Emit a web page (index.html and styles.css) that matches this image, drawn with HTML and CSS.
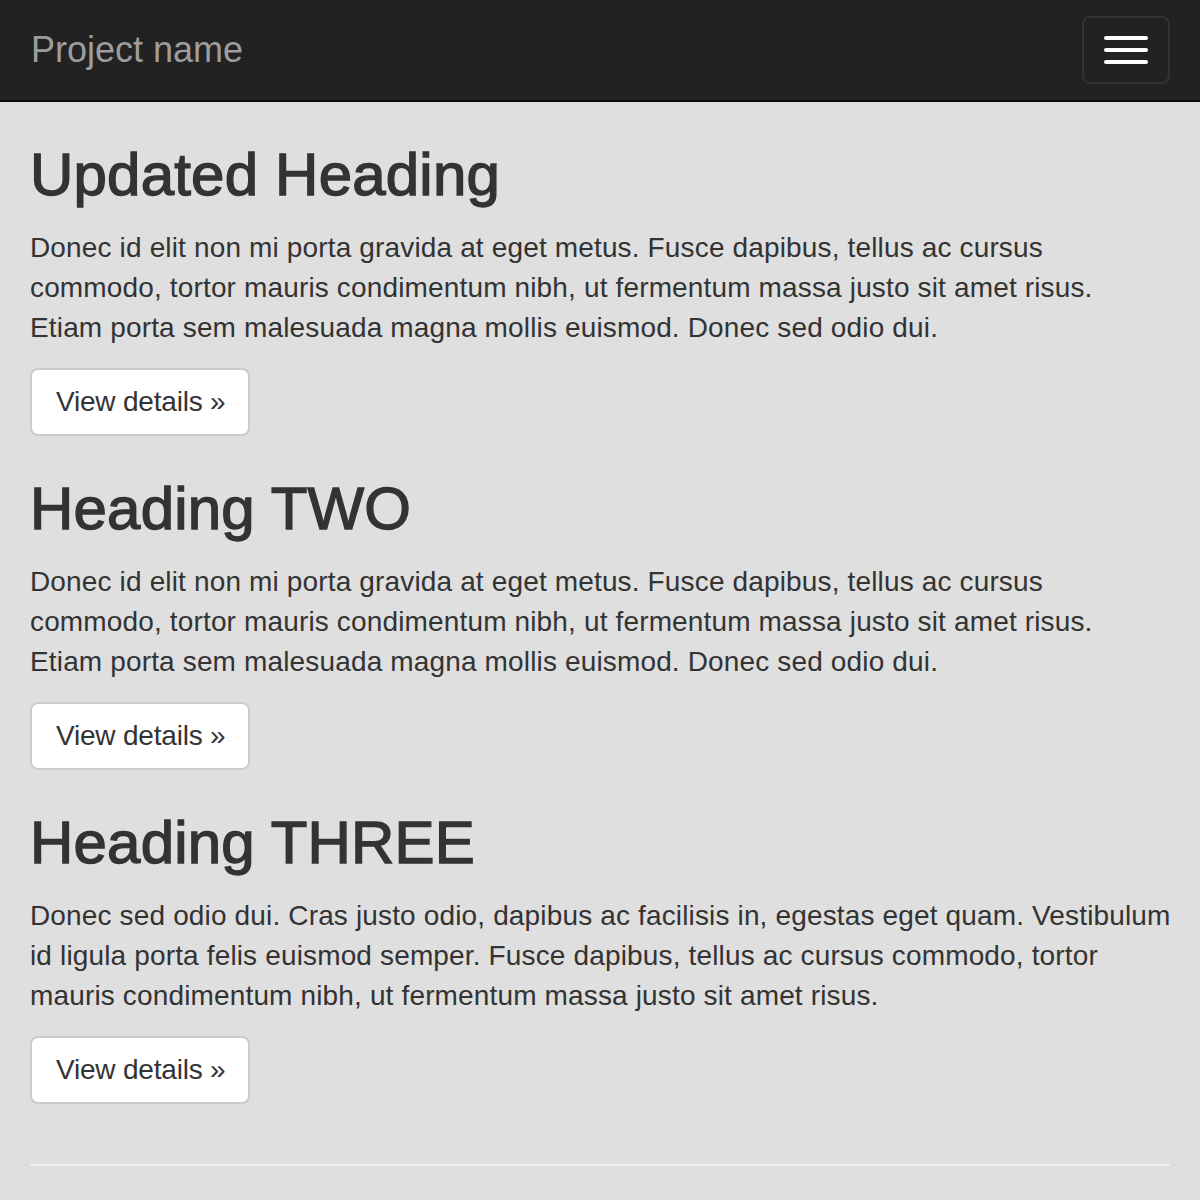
FILE: index.html
```html
<!DOCTYPE html>
<html>
<head>
<meta charset="utf-8">
<link rel="stylesheet" href="styles.css">
</head>
<body>
<nav class="navbar">
  <a class="brand" href="#">Project name</a>
  <button class="toggle" type="button"><span class="bar"></span><span class="bar"></span><span class="bar"></span></button>
</nav>
<div class="container">
  <div class="row">
    <div class="col">
      <h2>Updated Heading</h2>
      <p class="text">Donec id elit non mi porta gravida at eget metus. Fusce dapibus, tellus ac cursus<br>commodo, tortor mauris condimentum nibh, ut fermentum massa justo sit amet risus.<br>Etiam porta sem malesuada magna mollis euismod. Donec sed odio dui.</p>
      <p><a class="btn" href="#">View details &raquo;</a></p>
    </div>
    <div class="col">
      <h2>Heading TWO</h2>
      <p class="text">Donec id elit non mi porta gravida at eget metus. Fusce dapibus, tellus ac cursus<br>commodo, tortor mauris condimentum nibh, ut fermentum massa justo sit amet risus.<br>Etiam porta sem malesuada magna mollis euismod. Donec sed odio dui.</p>
      <p><a class="btn" href="#">View details &raquo;</a></p>
    </div>
    <div class="col">
      <h2>Heading THREE</h2>
      <p class="text">Donec sed odio dui. Cras justo odio, dapibus ac facilisis in, egestas eget quam. Vestibulum<br>id ligula porta felis euismod semper. Fusce dapibus, tellus ac cursus commodo, tortor<br>mauris condimentum nibh, ut fermentum massa justo sit amet risus.</p>
      <p><a class="btn" href="#">View details &raquo;</a></p>
    </div>
  </div>
  <hr class="rule">
</div>
</body>
</html>
```
FILE: styles.css
```css
* { box-sizing: border-box; }
html, body { margin: 0; padding: 0; }
body {
  background: #dfdfdf;
  color: #333;
  font-family: "Liberation Sans", Arial, sans-serif;
  font-size: 28px;
  line-height: 40px;
}
.navbar {
  height: 102px;
  background: #222;
  border-bottom: 2px solid #080808;
  display: flex;
  justify-content: space-between;
  align-items: flex-start;
}
.brand {
  color: #9d9d9d;
  font-size: 36px;
  line-height: 40px;
  padding: 30px 30px 30px 31px;
  text-decoration: none;
}
.toggle {
  margin: 16px 30px 0 0;
  width: 88px;
  height: 68px;
  padding: 18px 20px;
  background: transparent;
  border: 2px solid #333;
  border-radius: 8px;
  display: flex;
  flex-direction: column;
  gap: 8px;
}
.bar {
  display: block;
  width: 44px;
  height: 4px;
  background: #fff;
  border-radius: 2px;
}
.container {
  padding: 0 30px;
}
.row {
  display: flow-root;
}
h2 {
  font-size: 60px;
  line-height: 66px;
  font-weight: 400;
  letter-spacing: 0.2px;
  -webkit-text-stroke: 1.4px #333;
  margin: 40px 0 20px;
}
p { margin: 0 0 20px; }
.text {
  white-space: nowrap;
  letter-spacing: 0.15px;
}
.btn {
  display: inline-block;
  background: #fff;
  color: #333;
  border: 2px solid #ccc;
  border-radius: 8px;
  padding: 12px 23px 12px 24px;
  font-size: 28px;
  line-height: 40px;
  letter-spacing: -0.2px;
  text-decoration: none;
  vertical-align: middle;
}
.rule {
  border: 0;
  border-top: 2px solid #eee;
  margin: 40px 0;
}
```
